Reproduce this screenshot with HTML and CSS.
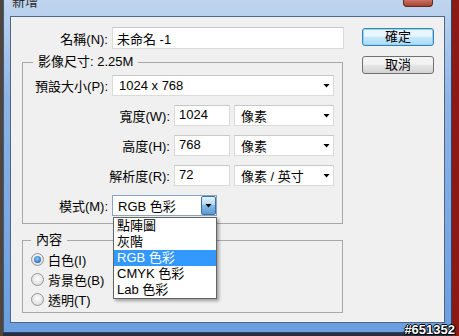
FILE: index.html
```html
<!DOCTYPE html>
<html lang="zh-Hant">
<head>
    <meta charset="UTF-8">
    <title>新增</title>
    <link rel="stylesheet" href="styles.css">
</head>
<body>

<div class="window">
    <div class="titlebar">
        <span class="title">新增</span>
        <span class="close"></span>
    </div>

    <div class="client">
        <div class="form">
            <div class="row name-row">
                <label class="lbl" for="name">名稱(N):</label>
                <input class="text name" id="name" value="未命名 -1">
            </div>

            <fieldset class="group size">
                <legend>影像尺寸: 2.25M</legend>
                <div class="rows">
                    <div class="row">
                        <span class="lbl">預設大小(P):</span>
                        <div class="select preset">1024 x 768<i class="arrow"></i></div>
                    </div>
                    <div class="row">
                        <span class="lbl lbl-long">寬度(W):</span>
                        <input class="text num" value="1024">
                        <div class="select unit">像素<i class="arrow"></i></div>
                    </div>
                    <div class="row">
                        <span class="lbl lbl-long">高度(H):</span>
                        <input class="text num" value="768">
                        <div class="select unit">像素<i class="arrow"></i></div>
                    </div>
                    <div class="row">
                        <span class="lbl lbl-long">解析度(R):</span>
                        <input class="text num" value="72">
                        <div class="select unit">像素 / 英寸<i class="arrow"></i></div>
                    </div>
                    <div class="row">
                        <span class="lbl">模式(M):</span>
                        <div class="select mode">
                            RGB 色彩
                            <span class="drop-btn"><i class="arrow"></i></span>
                            <ul class="menu">
                                <li>點陣圖</li>
                                <li>灰階</li>
                                <li class="active">RGB 色彩</li>
                                <li>CMYK 色彩</li>
                                <li>Lab 色彩</li>
                            </ul>
                        </div>
                    </div>
                </div>
            </fieldset>

            <fieldset class="group content">
                <legend>內容</legend>
                <div class="radios">
                    <div class="radio checked"><span class="dot"></span>白色(I)</div>
                    <div class="radio"><span class="dot"></span>背景色(B)</div>
                    <div class="radio"><span class="dot"></span>透明(T)</div>
                </div>
            </fieldset>
        </div>

        <div class="buttons">
            <button class="btn default">確定</button>
            <button class="btn">取消</button>
        </div>
    </div>
</div>

<div class="stamp">#651352</div>

</body>
</html>
```

FILE: styles.css
```css
/* Desktop */
body {
    margin: 0;
    width: 459px;
    height: 336px;
    overflow: hidden;
    position: relative;
    font-family: "Liberation Sans", "Noto Sans CJK TC", sans-serif;
    font-size: 13px;
    color: #000;
    background: linear-gradient(to right, #514638 0 3px, #2a2e3a 3px 452px, #8c1a14 452px);
}

/* Window frame */
.window {
    width: 449px;
    height: 333px;
    margin-left: 3px;
    box-sizing: border-box;
    display: flex;
    flex-direction: column;
    background: linear-gradient(to bottom, #c0d5ee, #8db4e6 30%, #6a9ee0);
    border-left: 1px solid #3d5a86;
    border-right: 1px solid #2a4270;
    border-bottom: 1px solid #2a4270;
}

.titlebar {
    height: 16px;
    flex-shrink: 0;
    display: flex;
    align-items: flex-start;
    overflow: hidden;
}

.title {
    margin: -5px 0 0 8px;
    line-height: 14px;
    color: #2b2b2b;
}

.close {
    margin-left: auto;
    margin-right: 18px;
    width: 30px;
    height: 7px;
    box-sizing: border-box;
    background: linear-gradient(#c77565, #a8402f);
    border: 1px solid #5e2a22;
    border-top: none;
    border-radius: 0 0 4px 4px;
}

/* Client area */
.client {
    flex: 1;
    margin: 0 6px 9px 6px;
    border: 1px solid #4f6686;
    background-color: #f0f0f0;
    display: flex;
    padding: 10px 0 0 11px;
}

.form {
    width: 322px;
}

.row {
    display: flex;
    align-items: center;
    gap: 4px;
    height: 21px;
}

.name-row {
    height: 22px;
}

.lbl {
    width: 85px;
    text-align: right;
    white-space: nowrap;
    flex-shrink: 0;
}

.name-row .lbl {
    width: 86px;
}

.lbl-long {
    width: 147px;
}

.text {
    box-sizing: border-box;
    height: 100%;
    border: 1px solid #dadada;
    border-top-color: #c8c8c8;
    background: #fff;
    font: inherit;
    padding: 0 4px;
    margin: 0;
    outline: none;
}

.name {
    width: 232px;
}

.num {
    width: 56px;
    padding-top: 0;
    padding-bottom: 3px;
}

/* Group boxes */
.group {
    box-sizing: border-box;
    width: 321px;
    margin: 6px 0 0;
    padding: 6px 7px 7px 0;
    border: 1px solid #a8a8a8;
    min-inline-size: 0;
}

.group legend {
    margin-left: 10px;
    padding: 0 5px;
    line-height: 14px;
}

.rows {
    display: flex;
    flex-direction: column;
    gap: 9px;
}

.content {
    margin-top: 9px;
    padding: 2px 0 3px 0;
}

.content legend {
    margin-left: 8px;
}

/* Dropdowns */
.select {
    position: relative;
    box-sizing: border-box;
    height: 100%;
    border: 1px solid #dadada;
    border-top-color: #c8c8c8;
    background: #fff;
    display: flex;
    align-items: center;
    padding-left: 6px;
    white-space: nowrap;
}

.preset {
    width: 222px;
}

.unit {
    width: 100px;
}

.arrow {
    display: block;
    width: 7px;
    height: 4px;
    margin-left: auto;
    margin-right: 3px;
    background: #000;
    clip-path: polygon(0 0, 100% 0, 50% 100%);
}

.mode {
    width: 105px;
    padding-left: 5px;
    border-color: #8aa3c0;
}

.drop-btn {
    margin-left: auto;
    width: 15px;
    height: 100%;
    box-sizing: border-box;
    border: 1px solid #3f6e9f;
    border-radius: 2px;
    background: linear-gradient(#e3f2fc, #b3d7f3 45%, #84bbe6 50%, #5f9bd0);
    display: flex;
    align-items: center;
    justify-content: center;
}

.drop-btn .arrow {
    margin: 0;
}

.menu {
    position: absolute;
    top: calc(100% + 2px);
    left: 0;
    width: 104px;
    box-sizing: border-box;
    margin: 0;
    padding: 0;
    list-style: none;
    background: #fff;
    border: 1px solid #646464;
    box-shadow: 2px 2px 3px rgba(0, 0, 0, 0.35);
    z-index: 2;
}

.menu li {
    height: 16px;
    line-height: 16px;
    padding-left: 3px;
}

.menu li.active {
    background-color: #3399ff;
    color: #fff;
}

/* Radio buttons */
.radios {
    padding-left: 8px;
}

.radio {
    display: flex;
    align-items: center;
    gap: 4px;
    height: 20px;
}

.dot {
    position: relative;
    width: 13px;
    height: 13px;
    box-sizing: border-box;
    border-radius: 50%;
    border: 1px solid #959595;
    background: radial-gradient(circle at 50% 40%, #fefefe, #d4d4d4);
}

.checked .dot::after {
    content: "";
    position: absolute;
    left: 2px;
    top: 2px;
    width: 7px;
    height: 7px;
    border-radius: 50%;
    background: radial-gradient(circle at 45% 40%, #8fd0f8, #2a6fc0 70%, #1c4f94);
}

/* Buttons */
.buttons {
    margin-left: 18px;
    padding-top: 1px;
    display: flex;
    flex-direction: column;
    gap: 10px;
}

.btn {
    width: 72px;
    height: 18px;
    box-sizing: border-box;
    padding: 0;
    font: inherit;
    line-height: 16px;
    color: #000;
    border: 1px solid #707070;
    border-radius: 3px;
    background: linear-gradient(#f3f3f3 0 45%, #e6e6e6 50%, #d2d2d2);
}

.btn.default {
    border-color: #3c7fb1;
    box-shadow: inset 0 0 0 1px #8ad8f8;
    background: linear-gradient(#eaf6fd 0 45%, #c9e9fb 50%, #a9dbf6);
}

/* Watermark */
.stamp {
    position: absolute;
    right: 4px;
    bottom: -1px;
    font-family: "Liberation Sans", sans-serif;
    font-weight: bold;
    font-size: 13px;
    line-height: 15px;
    color: #fff;
    text-shadow: -1px 0 #000, 1px 0 #000, 0 -1px #000, 0 1px #000, 1px 1px #000;
}
```
